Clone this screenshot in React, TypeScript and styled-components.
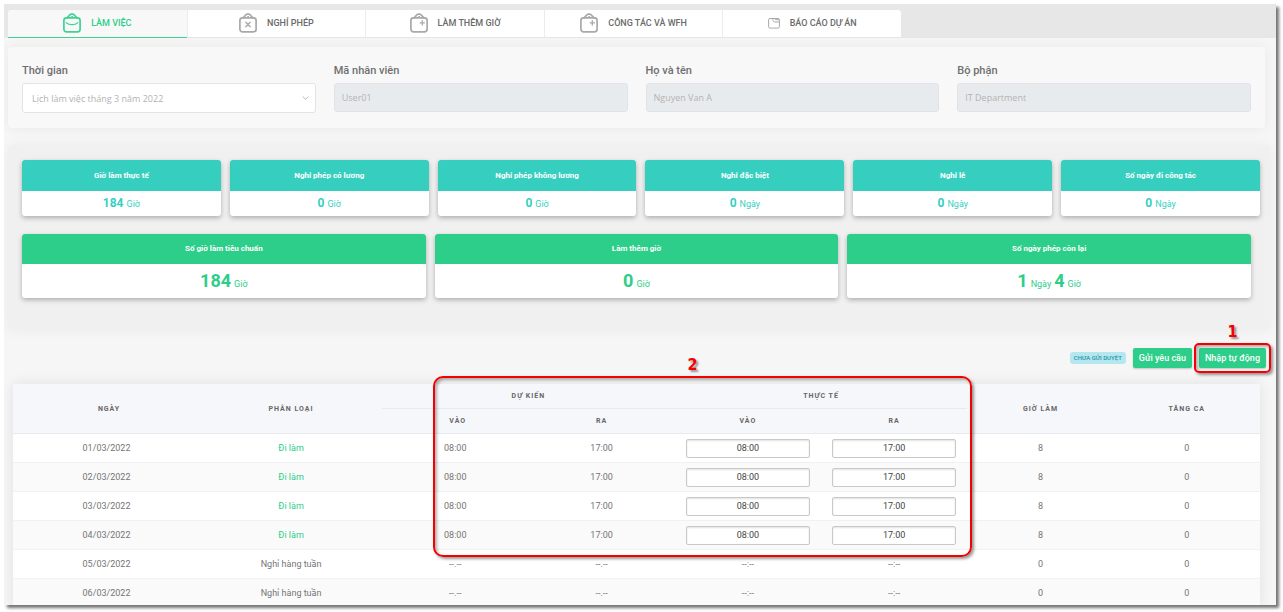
import React from "react";
import styled, { createGlobalStyle, css } from "styled-components";

const GREEN = "#2dce89";
const TEAL = "#36cfbf";

const GlobalStyle = createGlobalStyle`
  *, *::before, *::after { box-sizing: border-box; }
  body { margin: 0; background: #fff; font-family: Roboto, "Liberation Sans", sans-serif; color: #6f6f6f; }
  button, input, select { font-family: inherit; margin: 0; }
`;

const Frame = styled.main`
  height: calc(100vh - 11px);
  margin: 4px 7px 7px 4px;
  overflow: hidden;
  background: #f6f6f6;
  box-shadow: 3px 3px 3px rgba(0, 0, 0, 0.55);
`;

const Page = styled.div`
  display: flow-root;
`;

const TabBar = styled.nav`
  padding: 6px 4px 0;
  background: #e7e7e7;
`;

const TabList = styled.div`
  display: grid;
  grid-template-columns: repeat(5, 1fr);
  max-width: 893px;
  border-radius: 3px 3px 0 0;
  overflow: hidden;
`;

const Tab = styled.button<{ $active?: boolean }>`
  display: flex;
  align-items: center;
  justify-content: center;
  gap: 10px;
  height: 28px;
  padding: 0 0 1px;
  border: 0;
  border-left: 1px solid #ececec;
  border-bottom: 1px solid ${(p) => (p.$active ? "#3fd294" : "#e4e4e4")};
  background: ${(p) => (p.$active ? "#f8f8f8" : "#fff")};
  color: ${(p) => (p.$active ? GREEN : "#6a6a6a")};
  font-size: 9px;
  font-weight: 500;
  line-height: 12px;
  cursor: pointer;

  &:first-child {
    border-left: 0;
  }

  svg {
    color: ${(p) => (p.$active ? "#3fd294" : "#a9a9a9")};
  }
`;

const FilterCard = styled.form`
  display: grid;
  grid-template-columns: repeat(4, 1fr);
  gap: 18px;
  margin: 9px 11px 0 4px;
  padding: 16px 14px 15px;
  border-radius: 4px;
  background: #f8f8f8;
  box-shadow: 0 0 14px rgba(0, 0, 0, 0.06);
`;

const Field = styled.div`
  display: flex;
  flex-direction: column;
  gap: 5px;
  min-width: 0;
`;

const Label = styled.label`
  color: #6f6f6f;
  font-size: 11px;
  font-weight: 500;
  line-height: 15px;
`;

const controlStyle = css`
  width: 100%;
  border: 1px solid #e0e4e8;
  border-radius: 3px;
  color: #b3b3b3;
  font-family: "Open Sans", Lato, sans-serif;
  font-size: 9px;
  outline: 0;
`;

const ReadonlyInput = styled.input`
  ${controlStyle}
  height: 29px;
  padding: 0 7px;
  background: #e8ebee;
`;

const SelectBox = styled.div`
  position: relative;

  svg {
    position: absolute;
    right: 7px;
    top: 12px;
    color: #b8b8b8;
    pointer-events: none;
  }
`;

const Select = styled.select`
  ${controlStyle}
  display: block;
  height: 30px;
  padding: 0 9px;
  appearance: none;
  background: #fff;
`;

const StatsPanel = styled.section`
  display: flex;
  flex-direction: column;
  gap: 18px;
  margin: 18px 6px 0 4px;
  padding: 14px 10px 32px 14px;
  background: #f0f0f0;
  border-radius: 4px;
  box-shadow: 0 0 14px rgba(0, 0, 0, 0.05);
`;

const StatRow = styled.div<{ $columns: number; $inset?: boolean }>`
  display: grid;
  grid-template-columns: repeat(${(p) => p.$columns}, 1fr);
  gap: 9px;
  padding-right: ${(p) => (p.$inset ? 9 : 0)}px;
`;

const StatCard = styled.article<{ $large?: boolean }>`
  border-radius: 3px;
  overflow: hidden;
  background: #fff;
  color: ${(p) => (p.$large ? GREEN : TEAL)};
  text-align: center;
  box-shadow: 0 2px 5px rgba(0, 0, 0, 0.28);
`;

const StatTitle = styled.h2<{ $large?: boolean }>`
  margin: 0;
  background: ${(p) => (p.$large ? GREEN : TEAL)};
  color: #fff;
  font-size: 8px;
  font-weight: 700;
  line-height: ${(p) => (p.$large ? 30 : 31)}px;
`;

const StatValue = styled.p<{ $large?: boolean }>`
  display: flex;
  align-items: baseline;
  justify-content: center;
  gap: 3px;
  height: ${(p) => (p.$large ? 34 : 25)}px;
  margin: 0;
  padding-top: ${(p) => (p.$large ? 6 : 5)}px;
  font-size: 9px;
  line-height: 14px;

  strong {
    font-size: ${(p) => (p.$large ? 18 : 12)}px;
    font-weight: 700;
    line-height: ${(p) => (p.$large ? 22 : 14)}px;
  }
`;

const Actions = styled.div`
  display: flex;
  align-items: center;
  justify-content: flex-end;
  gap: 7px;
  margin: 18px 10px 0;
`;

const Badge = styled.span`
  padding: 0 4px;
  border-radius: 3px;
  background: #b5e8ee;
  color: #1f93aa;
  font-size: 6px;
  font-weight: 500;
  line-height: 12px;
`;

const ActionButton = styled.button`
  height: 20px;
  padding: 0 6px;
  border: 0;
  border-radius: 2px;
  background: ${GREEN};
  color: #fff;
  font-size: 9px;
  font-weight: 500;
  line-height: 20px;
  box-shadow: 0 1px 2px rgba(0, 0, 0, 0.2);
  cursor: pointer;
`;

const ButtonAnchor = styled.div`
  display: flex;
  position: relative;
`;

const calloutBox = css`
  position: absolute;
  border: 2px solid #f50000;
  pointer-events: none;
  box-shadow: 2px 2px 3px rgba(0, 0, 0, 0.4), inset 2px 2px 3px rgba(0, 0, 0, 0.3);
`;

const ButtonCallout = styled.span`
  ${calloutBox}
  inset: -5px;
  border-radius: 5px;
`;

const TableCallout = styled.span`
  ${calloutBox}
  top: -8px;
  left: 33.7%;
  right: 23.1%;
  height: 181px;
  border-radius: 10px;
`;

const CalloutNumber = styled.span<{ $shift?: boolean }>`
  position: absolute;
  bottom: 100%;
  left: 0;
  right: ${(p) => (p.$shift ? 20 : 0)}px;
  padding-bottom: 3px;
  color: #f50000;
  font-family: "DejaVu Sans Condensed", "DejaVu Sans", sans-serif;
  font-size: 16px;
  font-weight: 700;
  line-height: 20px;
  text-align: center;
  text-shadow: 2px 2px 2px rgba(0, 0, 0, 0.4);
`;

const TableWrap = styled.section`
  position: relative;
  margin: 16px 16px 0 9px;
  background: #fff;
  box-shadow: 0 0 14px rgba(0, 0, 0, 0.09);
`;

const Table = styled.table`
  width: 100%;
  table-layout: fixed;
  border-collapse: separate;
  border-spacing: 0;
  text-align: center;
`;

const DateCol = styled.col`
  width: 15%;
`;

const TypeCol = styled.col`
  width: 14.6%;
`;

const HeadCell = styled.th`
  height: 25px;
  padding: 0;
  background: #f6f7fb;
  border-bottom: 1px solid #e8eaf0;
  color: #666;
  font-size: 7px;
  font-weight: 700;
  letter-spacing: 1px;
  line-height: 12px;

  &:first-child {
    padding-left: 5px;
  }
`;

const Row = styled.tr`
  &:nth-child(even) {
    background: #fafafa;
  }
`;

const Cell = styled.td<{ $working?: boolean }>`
  height: 29px;
  padding: 0 11px;
  border-bottom: 1px solid #f0f1f6;
  color: ${(p) => (p.$working ? GREEN : "#757575")};
  font-size: 9px;
  line-height: 14px;
`;

const TimeInput = styled.input`
  display: block;
  width: 100%;
  height: 19px;
  padding: 0;
  border: 1px solid #c9c9c9;
  border-radius: 2px;
  background: #fff;
  color: #444;
  font-size: 9px;
  text-align: center;
  box-shadow: inset 0 1px 2px rgba(0, 0, 0, 0.12);
`;

type BagKind = "smile" | "cross" | "plus";

const BagIcon = ({ kind }: { kind: BagKind }) => (
  <svg width="18" height="20" viewBox="0 0 18 20" fill="none" stroke="currentColor" strokeWidth="1.7" strokeLinecap="round" strokeLinejoin="round" aria-hidden="true">
    <rect x="0.9" y="4.8" width="16.2" height="14" rx="2.6" />
    <path d="M4 4.800L6.200 2.600C6.800 1.600 7.600 1.200 8.400 1.200h1.200c0.800 0 1.600 0.400 2.200 1.400L14 4.800" />
    <circle cx="9" cy="3.9" r="0.5" strokeWidth="1" />
    {kind === "smile" && <path d="M3.200 9.600c2.800 2.800 8.800 2.800 11.600 0" strokeWidth="1.300" />}
    {kind === "cross" && <path d="M6.800 9.200l4.400 4.600M11.200 9.200l-4.400 4.600" strokeWidth="1.300" />}
    {kind === "plus" && <path d="M12.300 7.600v4.400M10.100 9.800h4.400" strokeWidth="1.300" />}
  </svg>
);

const ReportIcon = () => (
  <svg width="12" height="12" viewBox="0 0 12 12" fill="none" stroke="currentColor" strokeLinejoin="round" aria-hidden="true">
    <rect x="0.6" y="1.5" width="10.8" height="9.6" rx="1.4" />
    <path d="M4 1.500C5.400 2 4.600 5 6.500 5h4.900M7.500 1.500v1.200h3.700" />
  </svg>
);

const Chevron = () => (
  <svg width="7" height="6" viewBox="0 0 7 6" fill="none" stroke="currentColor" aria-hidden="true">
    <path d="M0.700 1.500l2.800 2.800 2.800-2.800" />
  </svg>
);

const tabs: { label: string; icon: React.ReactNode }[] = [
  { label: "LÀM VIỆC", icon: <BagIcon kind="smile" /> },
  { label: "NGHỈ PHÉP", icon: <BagIcon kind="cross" /> },
  { label: "LÀM THÊM GIỜ", icon: <BagIcon kind="plus" /> },
  { label: "CÔNG TÁC VÀ WFH", icon: <BagIcon kind="plus" /> },
  { label: "BÁO CÁO DỰ ÁN", icon: <ReportIcon /> },
];

const employee = [
  { id: "code", label: "Mã nhân viên", value: "User01" },
  { id: "name", label: "Họ và tên", value: "Nguyen Van A" },
  { id: "department", label: "Bộ phận", value: "IT Department" },
];

type Stat = { title: string; values: [string, string][] };

const hourStats: Stat[] = [
  { title: "Giờ làm thực tế", values: [["184", "Giờ"]] },
  { title: "Nghỉ phép có lương", values: [["0", "Giờ"]] },
  { title: "Nghỉ phép không lương", values: [["0", "Giờ"]] },
  { title: "Nghỉ đặc biệt", values: [["0", "Ngày"]] },
  { title: "Nghỉ lễ", values: [["0", "Ngày"]] },
  { title: "Số ngày đi công tác", values: [["0", "Ngày"]] },
];

const totalStats: Stat[] = [
  { title: "Số giờ làm tiêu chuẩn", values: [["184", "Giờ"]] },
  { title: "Làm thêm giờ", values: [["0", "Giờ"]] },
  { title: "Số ngày phép còn lại", values: [["1", "Ngày"], ["4", "Giờ"]] },
];

const days = [
  { date: "01/03/2022", working: true },
  { date: "02/03/2022", working: true },
  { date: "03/03/2022", working: true },
  { date: "04/03/2022", working: true },
  { date: "05/03/2022", working: false },
  { date: "06/03/2022", working: false },
];

const StatItem = ({ stat, large }: { stat: Stat; large?: boolean }) => (
  <StatCard $large={large}>
    <StatTitle $large={large}>{stat.title}</StatTitle>
    <StatValue $large={large}>
      {stat.values.map(([amount, unit]) => (
        <React.Fragment key={unit}>
          <strong>{amount}</strong>
          <span>{unit}</span>
        </React.Fragment>
      ))}
    </StatValue>
  </StatCard>
);

export default function App() {
  return (
    <>
      <GlobalStyle />
      <Frame>
        <Page>
          <TabBar>
            <TabList role="tablist">
              {tabs.map((tab, i) => (
                <Tab key={tab.label} type="button" role="tab" aria-selected={i === 0} $active={i === 0}>
                  {tab.icon}
                  {tab.label}
                </Tab>
              ))}
            </TabList>
          </TabBar>

          <FilterCard>
            <Field>
              <Label htmlFor="period">Thời gian</Label>
              <SelectBox>
                <Select id="period">
                  <option>Lịch làm việc tháng 3 năm 2022</option>
                </Select>
                <Chevron />
              </SelectBox>
            </Field>
            {employee.map((f) => (
              <Field key={f.id}>
                <Label htmlFor={f.id}>{f.label}</Label>
                <ReadonlyInput id={f.id} value={f.value} readOnly />
              </Field>
            ))}
          </FilterCard>

          <StatsPanel>
            <StatRow $columns={6}>
              {hourStats.map((s) => (
                <StatItem key={s.title} stat={s} />
              ))}
            </StatRow>
            <StatRow $columns={3} $inset>
              {totalStats.map((s) => (
                <StatItem key={s.title} stat={s} large />
              ))}
            </StatRow>
          </StatsPanel>

          <Actions>
            <Badge>CHƯA GỬI DUYỆT</Badge>
            <ActionButton type="button">Gửi yêu cầu</ActionButton>
            <ButtonAnchor>
              <ActionButton type="button">Nhập tự động</ActionButton>
              <ButtonCallout>
                <CalloutNumber>1</CalloutNumber>
              </ButtonCallout>
            </ButtonAnchor>
          </Actions>

          <TableWrap>
            <Table>
              <colgroup>
                <DateCol />
                <TypeCol />
                <col span={6} />
              </colgroup>
              <thead>
                <tr>
                  <HeadCell rowSpan={2} scope="col">NGÀY</HeadCell>
                  <HeadCell rowSpan={2} scope="col">PHÂN LOẠI</HeadCell>
                  <HeadCell colSpan={2} scope="colgroup">DỰ KIẾN</HeadCell>
                  <HeadCell colSpan={2} scope="colgroup">THỰC TẾ</HeadCell>
                  <HeadCell rowSpan={2} scope="col">GIỜ LÀM</HeadCell>
                  <HeadCell rowSpan={2} scope="col">TĂNG CA</HeadCell>
                </tr>
                <tr>
                  <HeadCell scope="col">VÀO</HeadCell>
                  <HeadCell scope="col">RA</HeadCell>
                  <HeadCell scope="col">VÀO</HeadCell>
                  <HeadCell scope="col">RA</HeadCell>
                </tr>
              </thead>
              <tbody>
                {days.map(({ date, working }) => (
                  <Row key={date}>
                    <Cell>{date}</Cell>
                    <Cell $working={working}>{working ? "Đi làm" : "Nghỉ hàng tuần"}</Cell>
                    <Cell>{working ? "08:00" : "--.--"}</Cell>
                    <Cell>{working ? "17:00" : "--.--"}</Cell>
                    <Cell>
                      {working ? <TimeInput aria-label={`Giờ vào thực tế ${date}`} defaultValue="08:00" /> : "--:--"}
                    </Cell>
                    <Cell>
                      {working ? <TimeInput aria-label={`Giờ ra thực tế ${date}`} defaultValue="17:00" /> : "--:--"}
                    </Cell>
                    <Cell>{working ? 8 : 0}</Cell>
                    <Cell>0</Cell>
                  </Row>
                ))}
              </tbody>
            </Table>
            <TableCallout>
              <CalloutNumber $shift>2</CalloutNumber>
            </TableCallout>
          </TableWrap>
        </Page>
      </Frame>
    </>
  );
}
